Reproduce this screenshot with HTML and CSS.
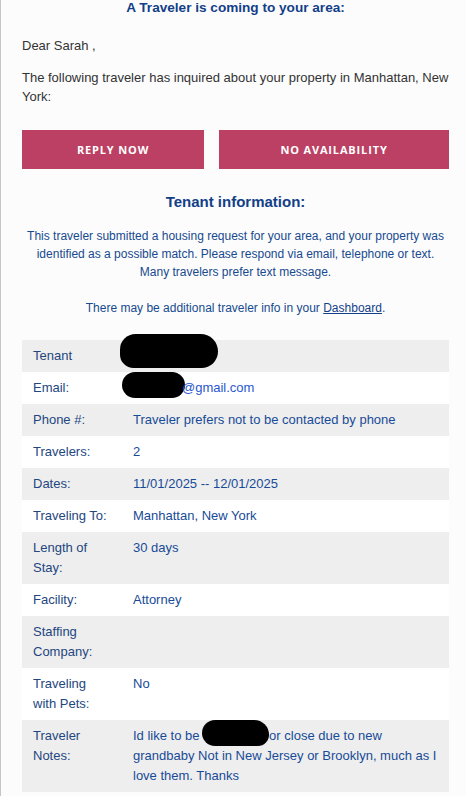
FILE: index.html
```html
<!DOCTYPE html>
<html lang="en">
<head>
    <meta charset="UTF-8">
    <title>A Traveler is coming to your area</title>
    <link rel="stylesheet" href="styles.css">
</head>
<body>
<div class="mail">
    <!-- Heading -->
    <h1 class="title">A Traveler is coming to your area:</h1>

    <p class="greeting">Dear Sarah ,</p>
    <p class="intro">The following traveler has inquired about your property in Manhattan, New York:</p>

    <!-- Action buttons -->
    <div class="actions">
        <a class="btn btn-reply" href="#">REPLY NOW</a>
        <a class="btn btn-none" href="#">NO AVAILABILITY</a>
    </div>

    <h2 class="title sub">Tenant information:</h2>

    <p class="notice">
        This traveler submitted a housing request for your area, and your property was identified as a possible match. Please respond via email, telephone or text. Many travelers prefer text message.<br><br>
        There may be additional traveler info in your <a href="#">Dashboard</a>.
    </p>

    <!-- Tenant details -->
    <table class="details">
        <colgroup>
            <col class="col-label">
            <col>
        </colgroup>
        <tr>
            <td class="label">Tenant</td>
            <td class="value"><span class="redact redact-name"></span></td>
        </tr>
        <tr>
            <td class="label">Email:</td>
            <td class="value"><span class="redact redact-mail"></span><a class="link" href="#">@gmail.com</a></td>
        </tr>
        <tr>
            <td class="label">Phone #:</td>
            <td class="value link">Traveler prefers not to be contacted by phone</td>
        </tr>
        <tr>
            <td class="label">Travelers:</td>
            <td class="value">2</td>
        </tr>
        <tr>
            <td class="label">Dates:</td>
            <td class="value">11/01/2025 -- 12/01/2025</td>
        </tr>
        <tr>
            <td class="label">Traveling To:</td>
            <td class="value">Manhattan, New York</td>
        </tr>
        <tr>
            <td class="label">Length of Stay:</td>
            <td class="value">30 days</td>
        </tr>
        <tr>
            <td class="label">Facility:</td>
            <td class="value">Attorney</td>
        </tr>
        <tr>
            <td class="label">Staffing Company:</td>
            <td class="value"></td>
        </tr>
        <tr>
            <td class="label">Traveling with Pets:</td>
            <td class="value">No</td>
        </tr>
        <tr>
            <td class="label">Traveler Notes:</td>
            <td class="value">Id like to be <span class="redact redact-note"></span>or close due to new grandbaby Not in New Jersey or Brooklyn, much as I love them. Thanks</td>
        </tr>
    </table>
</div>
</body>
</html>
```

FILE: styles.css
```css
/* Page */
* {
    box-sizing: border-box;
}

body {
    margin: 0;
    background: #fcfcfc;
    border-left: 1px solid #c3c7cb;
    font-family: Arial, "Liberation Sans", sans-serif;
    min-height: 100vh;
}

.mail {
    padding: 0 17px 0 21px;
}

/* Headings */
.title {
    margin: -1px 0 0;
    font-size: 13.6px;
    line-height: 17px;
    font-weight: bold;
    color: #123f88;
    text-align: center;
}
.title.sub {
    margin-top: 24px;
    font-size: 15px;
    line-height: 18px;
}

/* Intro copy */
.greeting,
.intro {
    margin: 0;
    font-size: 13px;
    line-height: 19px;
    color: #333;
}
.greeting {
    margin-top: 20px;
}
.intro {
    margin-top: 13px;
}

/* Buttons */
.actions {
    display: flex;
    gap: 15px;
    margin-top: 24px;
}
.btn {
    display: flex;
    align-items: center;
    justify-content: center;
    height: 39px;
    background: #bb4063;
    color: #fff;
    text-decoration: none;
    font-family: "Open Sans", sans-serif;
    font-weight: bold;
    font-size: 11px;
    letter-spacing: 0.85px;
}
.btn-reply {
    width: 182px;
}
.btn-none {
    flex: 1;
}

/* Notice */
.notice {
    margin: 16px 0 0;
    font-size: 12px;
    line-height: 18px;
    color: #174a8f;
    text-align: center;
}
.notice a {
    color: #123f88;
}

/* Details table */
.details {
    width: 100%;
    margin-top: 23px;
    border-collapse: collapse;
    table-layout: fixed;
    font-size: 13px;
    line-height: 20px;
}
.col-label {
    width: 100px;
}
.details td {
    padding: 6px 11px;
    vertical-align: top;
}
.details tr:nth-child(odd) {
    background: #eeeeee;
}
.details tr:nth-child(even) {
    background: #ffffff;
}
.details .label {
    padding-right: 13px;
    color: #23467f;
}
.details .value {
    padding-left: 11px;
    color: #174b97;
}
.link,
.value .link {
    color: #2a57cf;
    text-decoration: none;
}

/* Redacted bits */
.redact {
    display: inline-block;
    vertical-align: top;
    background: #000;
}
.redact-name {
    width: 98px;
    height: 34px;
    margin: -12px 0 -2px -13px;
    border-radius: 16px 18px 17px 14px;
}
.redact-mail {
    width: 63px;
    height: 26px;
    margin: -6px -3px 0 -11px;
    border-radius: 14px;
}
.redact-note {
    width: 67px;
    height: 26px;
    margin: -6px 0 0 -1px;
    border-radius: 14px 16px 12px 14px;
}
```
